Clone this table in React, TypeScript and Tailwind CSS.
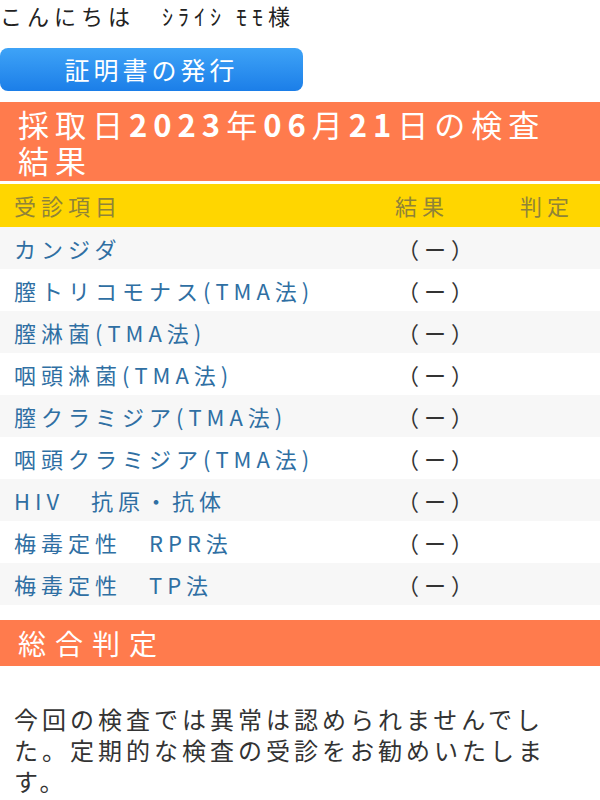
const items = [
  'カンジダ',
  '膣トリコモナス(TMA法)',
  '膣淋菌(TMA法)',
  '咽頭淋菌(TMA法)',
  '膣クラミジア(TMA法)',
  '咽頭クラミジア(TMA法)',
  'HIV　抗原・抗体',
  '梅毒定性　RPR法',
  '梅毒定性　TP法',
];

export default function App() {
  return (
    <div
      className="w-[600px] h-[800px] overflow-hidden bg-white text-[#333]"
      style={{ fontFamily: '"Noto Sans CJK JP", "Noto Sans", sans-serif' }}
    >
      {/* 挨拶 */}
      <div className="pt-[1px] text-[22px] leading-[28px] tracking-[5px] text-[#222]">
        こんにちは　ｼﾗｲｼ ﾓﾓ様
      </div>

      <div className="pt-[19px] pb-[11px]">
        <button className="w-[303px] h-[43px] rounded-[8px] bg-gradient-to-b from-[#3ea3f7] to-[#1b7ee8] text-white text-[25px] tracking-[4px] leading-none">
          証明書の発行
        </button>
      </div>

      {/* 検査結果 */}
      <div className="bg-[#ff7b4d] text-white text-[31px] leading-[36px] tracking-[6px] px-[18px] pt-[4px] pb-[3px]">
        採取日<span className="font-bold">2023</span>年<span className="font-bold">06</span>月<span className="font-bold">21</span>日の検査結果
      </div>

      <div className="mt-[3px] bg-[#ffd600] h-[43px] flex items-center text-[22px] tracking-[5px] text-[#8f8338]">
        <div className="flex-1 pl-[14px]">受診項目</div>
        <div className="w-[125px]">結果</div>
        <div className="w-[80px]">判定</div>
      </div>

      <div>
        {items.map((item, i) => (
          <div
            key={item}
            className={`h-[42px] flex items-center text-[22px] tracking-[5px] ${i % 2 === 0 ? 'bg-[#f7f7f7]' : 'bg-white'}`}
          >
            <div className="flex-1 pl-[14px] text-[#2f6fa3]">{item}</div>
            <div className="w-[203px] text-[#333]">（ー）</div>
          </div>
        ))}
      </div>

      {/* 総合判定 */}
      <div className="mt-[15px] bg-[#ff7b4d] text-white text-[28px] tracking-[9px] h-[46px] flex items-center px-[18px]">
        総合判定
      </div>

      <p className="mt-[37px] pl-[14px] pr-[40px] text-[24px] leading-[31px] tracking-[4px] text-[#333]">
        今回の検査では異常は認められませんでした。定期的な検査の受診をお勧めいたします。
      </p>
    </div>
  );
}
